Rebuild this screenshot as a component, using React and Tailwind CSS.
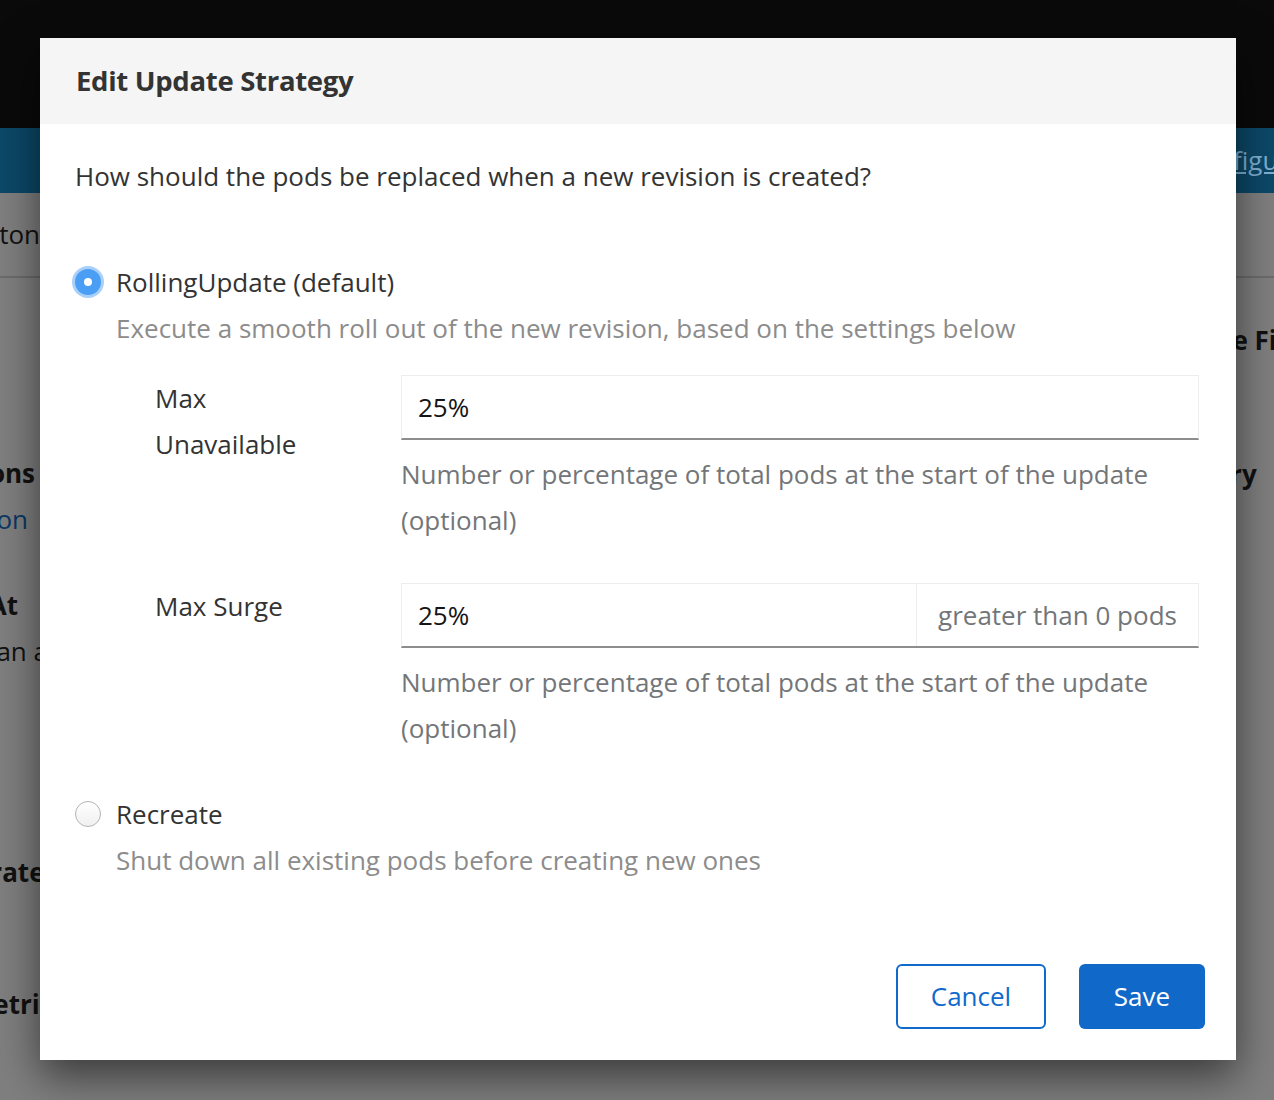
import React, { useState } from 'react';

function Radio({ checked }) {
  if (checked) {
    return (
      <span className="w-[26px] h-[26px] shrink-0 rounded-full bg-[#4a9ef3] ring-[3px] ring-[#a9d0f8] flex items-center justify-center">
        <span className="w-[8px] h-[8px] rounded-full bg-white" />
      </span>
    );
  }
  return (
    <span className="w-[26px] h-[26px] shrink-0 rounded-full border border-[#b3b3b3] bg-gradient-to-b from-white to-[#f0f0f0]" />
  );
}

function Field({ label, value, addon }) {
  return (
    <div className="flex">
      <div className="w-[326px] shrink-0 pl-[80px] text-[26px] leading-[46px] text-[#333]">
        {label}
      </div>
      <div className="flex-1">
        <div className="flex h-[65px] border border-[#ededed] border-b-2 border-b-[#8b8d8f]">
          <div className="flex-1 flex items-center px-[16px] text-[26px] text-[#151515]">{value}</div>
          {addon && (
            <div className="w-[282px] flex items-center justify-center border-l border-[#ededed] text-[26px] text-[#737679]">
              {addon}
            </div>
          )}
        </div>
        <p className="mt-[11px] text-[26px] leading-[46px] text-[#737679]">
          Number or percentage of total pods at the start of the update (optional)
        </p>
      </div>
    </div>
  );
}

export default function App() {
  const [strategy, setStrategy] = useState('rolling');

  return (
    <div className="relative w-[1274px] h-[1100px] overflow-hidden bg-[#7f7f7f] font-['Open_Sans',sans-serif]">
      {/* dimmed page behind the modal */}
      <div className="h-[128px] bg-[#0a0a0a]" />
      <div className="h-[65px] bg-[#0c4868] flex items-center pl-[1185px]">
        <span className="text-[26px] text-[#7fb0d2] underline whitespace-nowrap">Configure</span>
      </div>
      <div className="h-[85px] border-b-2 border-[#6c6c6c] flex items-center">
        <div className="w-[40px] flex justify-end overflow-hidden">
          <span className="text-[26px] text-[#111] whitespace-nowrap">Skeleton</span>
        </div>
      </div>
      <div className="flex justify-between">
        <div className="w-[40px] overflow-hidden text-[26px] leading-[46px] text-[#111] whitespace-nowrap">
          <div className="mt-[172px] flex justify-end font-bold"><span className="mr-[5px]">Conditions</span></div>
          <div className="flex justify-end text-[#0a3863]"><span className="mr-[12px]">Revision</span></div>
          <div className="mt-[40px] flex justify-end font-bold"><span className="mr-[22px]">Created At</span></div>
          <div className="flex justify-end"><span className="-mr-[8px]">less than a</span></div>
          <div className="mt-[175px] flex justify-end font-bold"><span className="-mr-[34px]">Update Strategy</span></div>
          <div className="mt-[86px] flex justify-end font-bold"><span className="-mr-[26px]">Metrics</span></div>
        </div>
        <div className="w-[58px] overflow-hidden text-[26px] leading-[46px] text-[#111] whitespace-nowrap font-bold">
          <div className="mt-[39px]">de Fields</div>
          <div className="mt-[88px] -ml-[2px]">ory</div>
        </div>
      </div>

      {/* modal */}
      <div className="absolute left-[40px] top-[38px] w-[1196px] h-[1022px] bg-white shadow-[0_16px_40px_rgba(0,0,0,0.55)] flex flex-col">
        <div className="h-[86px] bg-[#f5f5f5] flex items-center px-[36px]">
          <h1 className="text-[27.5px] font-bold text-[#333] tracking-[-0.3px]">Edit Update Strategy</h1>
        </div>
        <div className="flex-1 flex flex-col pl-[35px] pr-[37px] pt-[34px]">
          <p className="text-[26px] leading-[36px] text-[#333]">
            How should the pods be replaced when a new revision is created?
          </p>

          <label className="mt-[65px] flex items-center gap-[15px] cursor-pointer" onClick={() => setStrategy('rolling')}>
            <Radio checked={strategy === 'rolling'} />
            <span className="text-[26px] leading-[46px] text-[#333]">RollingUpdate (default)</span>
          </label>
          <p className="pl-[41px] text-[26px] leading-[46px] text-[#8c8c8c]">
            Execute a smooth roll out of the new revision, based on the settings below
          </p>

          <div className="mt-[24px] flex flex-col gap-[40px]">
            <Field label={<>Max<br />Unavailable</>} value="25%" />
            <Field label="Max Surge" value="25%" addon="greater than 0 pods" />
          </div>

          <label className="mt-[40px] flex items-center gap-[15px] cursor-pointer" onClick={() => setStrategy('recreate')}>
            <Radio checked={strategy === 'recreate'} />
            <span className="text-[26px] leading-[46px] text-[#333]">Recreate</span>
          </label>
          <p className="pl-[41px] text-[26px] leading-[46px] text-[#8c8c8c]">
            Shut down all existing pods before creating new ones
          </p>

          <div className="mt-auto mb-[31px] flex justify-end gap-[33px] -mr-[6px]">
            <button className="w-[150px] h-[65px] rounded-[6px] border-2 border-[#0f6acb] text-[26px] text-[#0f6acb] bg-white">
              Cancel
            </button>
            <button className="w-[126px] h-[65px] rounded-[6px] bg-[#1068c8] text-[26px] text-white">
              Save
            </button>
          </div>
        </div>
      </div>
    </div>
  );
}
